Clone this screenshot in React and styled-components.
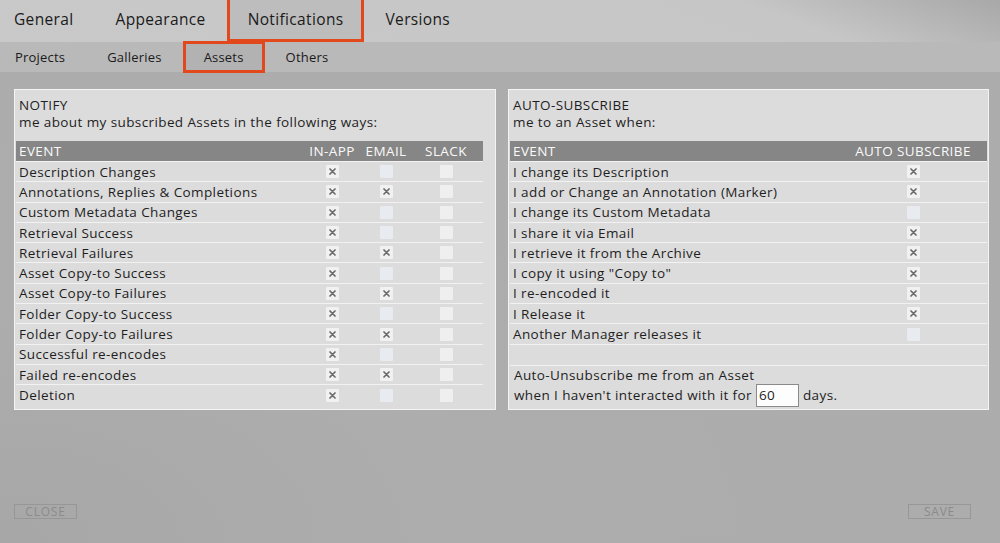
import React from "react";
import styled, { createGlobalStyle } from "styled-components";

const Global = createGlobalStyle`
  html, body { margin: 0; padding: 0; }
  body {
    font-family: "Open Sans", "Liberation Sans", sans-serif;
    background: #acacac;
    color: #1e1e1e;
  }
  * { box-sizing: border-box; }
`;

const Page = styled.div`
  width: 1000px;
  height: 543px;
  display: flex;
  flex-direction: column;
  background: radial-gradient(ellipse at 0% 100%, #a7a7a7 0, #adadad 30%, #acacac 100%);
  overflow: hidden;
`;

const TopBar = styled.nav`
  height: 42px;
  display: flex;
  align-items: stretch;
  background: linear-gradient(200deg, #a8a8a8 0, #c6c6c6 90px, #c9c9c9 100%);
`;

const Tab = styled.div`
  display: flex;
  align-items: center;
  padding: 0 18px 2px;
  font-size: 15.5px;
  color: #1a1a1a;
  letter-spacing: 0.35px;
  background: ${(p) => (p.$active ? "#bdbdbd" : "transparent")};
  border: 3px solid ${(p) => (p.$active ? "#e1481c" : "transparent")};
  border-top: none;
  margin-left: ${(p) => (p.$first ? "-7px" : "0")};
`;

const SubBar = styled.nav`
  height: 30px;
  display: flex;
  align-items: stretch;
  background: #b9b9b9;
`;

const SubTab = styled.div`
  display: flex;
  align-items: center;
  padding-left: ${(p) => (p.$first ? "12px" : "18px")};
  padding-right: 18px;
  font-size: 13px;
  letter-spacing: 0.2px;
  color: #1a1a1a;
  background: ${(p) => (p.$active ? "#b2b2b2" : "transparent")};
  border: 3px solid ${(p) => (p.$active ? "#e1481c" : "transparent")};
  margin-top: -1px;
  height: 32px;
`;

const Main = styled.main`
  flex: 1;
  display: flex;
  flex-direction: column;
  padding: 17px 11px 24px 14px;
`;

const Panels = styled.div`
  display: grid;
  grid-template-columns: 482px 481px;
  gap: 12px;
`;

const Panel = styled.section`
  height: 321px;
  background: #dcdcdc;
  border: 1px solid #f4f4f4;
  padding: 0 ${(p) => p.$padRight || 1}px 0 1px;
  display: flex;
  flex-direction: column;
`;

const Intro = styled.div`
  height: 51px;
  padding: 7px 0 0 3px;
  font-size: 13.5px;
  letter-spacing: 0.4px;
  line-height: 17px;
  color: #1e1e1e;
`;

const HeadRow = styled.div`
  display: grid;
  grid-template-columns: ${(p) => p.$cols};
  height: 21px;
  align-items: center;
  background: #868686;
  color: #fafafa;
  font-size: 13.5px;
  letter-spacing: 0.4px;
  padding-left: 3px;
  border-bottom: 1px solid #f2f2f2;
`;

const HeadCell = styled.div`
  text-align: ${(p) => (p.$center ? "center" : "left")};
  white-space: nowrap;
`;

const Row = styled.div`
  display: grid;
  grid-template-columns: ${(p) => p.$cols};
  height: 20.3px;
  align-items: center;
  font-size: 13.5px;
  letter-spacing: 0.4px;
  color: #1e1e1e;
  padding-left: 3px;
  border-bottom: ${(p) => (p.$last ? "none" : "1px solid #f2f2f2")};
`;

const Cell = styled.div`
  display: flex;
  justify-content: ${(p) => (p.$center ? "center" : "flex-start")};
  white-space: nowrap;
`;

const Box = styled.span`
  width: 13px;
  height: 13px;
  display: inline-flex;
  align-items: center;
  justify-content: center;
  background: ${(p) => (p.$checked ? "#f1f1f1" : p.$tint ? "#e8ebef" : "#efefef")};
  border-radius: 1px;
`;

const Unsub = styled.div`
  flex: 1;
  border-top: 1px solid #f2f2f2;
  padding: 0 0 0 4px;
  font-size: 13.5px;
  letter-spacing: 0.4px;
  line-height: 18px;
  color: #1e1e1e;
`;

const Inline = styled.div`
  display: flex;
  align-items: center;
  gap: 4px;
`;

const DaysInput = styled.div`
  width: 43px;
  height: 23px;
  background: #fdfdfd;
  border: 1px solid #8a8a8a;
  padding-left: 2px;
  display: flex;
  align-items: center;
  font-size: 13.5px;
`;

const Footer = styled.footer`
  margin-top: auto;
  display: flex;
  justify-content: space-between;
  padding-right: 18px;
`;

const Button = styled.div`
  width: ${(p) => p.$w}px;
  height: 15px;
  border: 1px solid #979797;
  color: #8b8b8b;
  font-size: 12px;
  letter-spacing: 0.8px;
  display: flex;
  align-items: center;
  justify-content: center;
`;

const Cross = () => (
  <svg width="7" height="7" viewBox="0 0 7 7">
    <path d="M1 1 L6 6 M6 1 L1 6" stroke="#6a6a6a" strokeWidth="1.7" strokeLinecap="round" />
  </svg>
);

const Check = ({ on, tint }) => (
  <Box $checked={!!on} $tint={tint}>{on ? <Cross /> : null}</Box>
);

const leftCols = "1fr 62px 46px 74px";
const rightCols = "1fr 148px";

const notify = [
  ["Description Changes", 1, 0, 0],
  ["Annotations, Replies & Completions", 1, 1, 0],
  ["Custom Metadata Changes", 1, 0, 0],
  ["Retrieval Success", 1, 0, 0],
  ["Retrieval Failures", 1, 1, 0],
  ["Asset Copy-to Success", 1, 0, 0],
  ["Asset Copy-to Failures", 1, 1, 0],
  ["Folder Copy-to Success", 1, 0, 0],
  ["Folder Copy-to Failures", 1, 1, 0],
  ["Successful re-encodes", 1, 0, 0],
  ["Failed re-encodes", 1, 1, 0],
  ["Deletion", 1, 0, 0],
];

const auto = [
  ["I change its Description", 1],
  ["I add or Change an Annotation (Marker)", 1],
  ["I change its Custom Metadata", 0],
  ["I share it via Email", 1],
  ["I retrieve it from the Archive", 1],
  ['I copy it using "Copy to"', 1],
  ["I re-encoded it", 1],
  ["I Release it", 1],
  ["Another Manager releases it", 0],
];

export default function App() {
  return (
    <Page>
      <Global />
      <TopBar>
        <Tab $first>General</Tab>
        <Tab>Appearance</Tab>
        <Tab $active>Notifications</Tab>
        <Tab>Versions</Tab>
      </TopBar>
      <SubBar>
        <SubTab $first>Projects</SubTab>
        <SubTab>Galleries</SubTab>
        <SubTab $active>Assets</SubTab>
        <SubTab>Others</SubTab>
      </SubBar>
      <Main>
        <Panels>
          <Panel $padRight={12}>
            <Intro>
              NOTIFY
              <br />
              me about my subscribed Assets in the following ways:
            </Intro>
            <HeadRow $cols={leftCols}>
              <HeadCell>EVENT</HeadCell>
              <HeadCell $center>IN-APP</HeadCell>
              <HeadCell $center>EMAIL</HeadCell>
              <HeadCell $center>SLACK</HeadCell>
            </HeadRow>
            {notify.map(([name, a, e, s], i) => (
              <Row key={name} $cols={leftCols} $last={i === notify.length - 1}>
                <Cell>{name}</Cell>
                <Cell $center><Check on={a} /></Cell>
                <Cell $center><Check on={e} tint /></Cell>
                <Cell $center><Check on={s} /></Cell>
              </Row>
            ))}
          </Panel>
          <Panel>
            <Intro>
              AUTO-SUBSCRIBE
              <br />
              me to an Asset when:
            </Intro>
            <HeadRow $cols={rightCols}>
              <HeadCell>EVENT</HeadCell>
              <HeadCell $center>AUTO SUBSCRIBE</HeadCell>
            </HeadRow>
            {auto.map(([name, on]) => (
              <Row key={name} $cols={rightCols}>
                <Cell>{name}</Cell>
                <Cell $center><Check on={on} tint /></Cell>
              </Row>
            ))}
            <Row $cols={rightCols} $last />
            <Unsub>
              Auto-Unsubscribe me from an Asset
              <Inline>
                when I haven't interacted with it for
                <DaysInput>60</DaysInput>
                days.
              </Inline>
            </Unsub>
          </Panel>
        </Panels>
        <Footer>
          <Button $w={63}>CLOSE</Button>
          <Button $w={63}>SAVE</Button>
        </Footer>
      </Main>
    </Page>
  );
}
